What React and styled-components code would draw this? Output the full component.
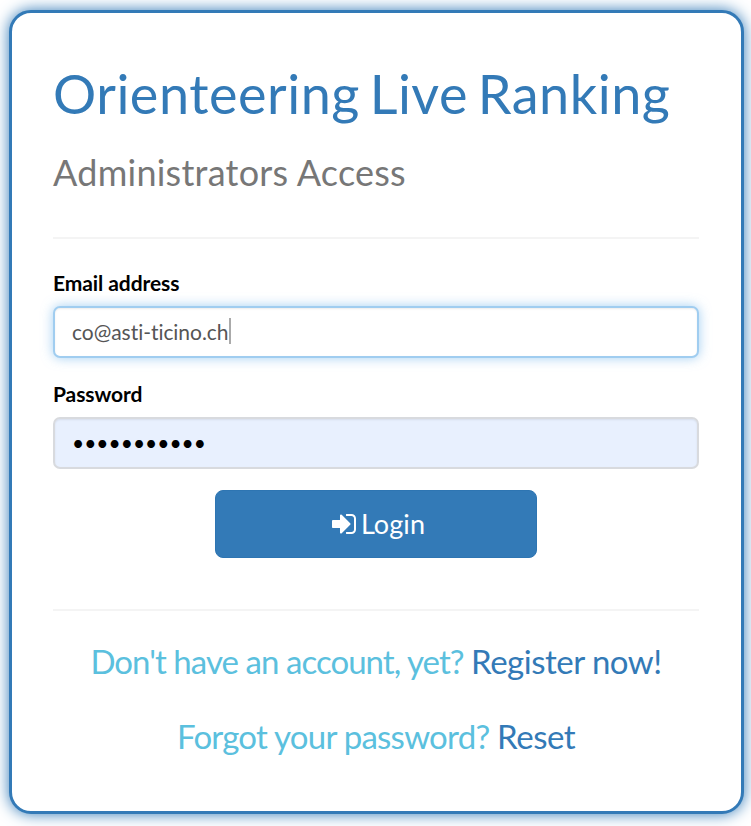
import React from "react";
import styled, { createGlobalStyle } from "styled-components";

const GlobalStyle = createGlobalStyle`
  * { box-sizing: border-box; }
  body {
    margin: 0;
    background: #fff;
    font-family: Lato, sans-serif;
    font-variant-ligatures: none;
    color: #000;
  }
`;

const Screen = styled.div`
  height: 826px;
  padding: 10px 7px 0 9px;
  overflow: hidden;
`;

const Panel = styled.main`
  height: 804px;
  padding: 50px 42px 0 41px;
  border: 3px solid #337ab7;
  border-radius: 22px;
  background: #fff;
  box-shadow: 0 0 15px #337ab7;
`;

const Title = styled.h1`
  margin: 0;
  font-size: 54px;
  font-weight: 400;
  line-height: 62px;
  letter-spacing: 0.52px;
  word-spacing: -4.6px;
  color: #337ab7;
  white-space: nowrap;
`;

const Subtitle = styled.h2`
  margin: 27px 0 0;
  font-size: 36px;
  font-weight: 400;
  line-height: 40px;
  letter-spacing: 0.25px;
  color: #777;
`;

const Divider = styled.hr`
  margin: ${({ $top }) => $top}px 0 0;
  border: 0;
  border-top: 2px solid #f4f4f4;
`;

const Label = styled.label`
  display: block;
  margin-top: ${({ $top }) => $top}px;
  height: 28px;
  font-size: 21px;
  font-weight: 700;
  line-height: 28px;
  letter-spacing: -0.08px;
`;

const Field = styled.div`
  display: flex;
  align-items: center;
  height: 52px;
  margin-top: 9px;
  padding: 0 17px 2px;
  border: 2px solid ${({ $focused }) => ($focused ? "#a0cdf0" : "#d8dade")};
  border-radius: 7px;
  background: ${({ $focused }) => ($focused ? "#fff" : "#e8f0fe")};
  box-shadow: inset 0 1px 2px rgba(0, 0, 0, 0.08)
    ${({ $focused }) => $focused && ", 0 0 12px rgba(102, 175, 233, 0.6)"};
  font-size: 21px;
  letter-spacing: -0.04px;
  color: #555;
`;

const Caret = styled.span`
  width: 2px;
  height: 26px;
  background: #aaa;
`;

const Dots = styled.span`
  color: #000;
  letter-spacing: 0;
`;

const Button = styled.button`
  display: flex;
  align-items: center;
  justify-content: center;
  gap: 5px;
  width: 322px;
  height: 68px;
  margin: 21px 0 0 161.5px;
  padding: 0 0 1px 6px;
  border: 1px solid #2e75b2;
  border-radius: 8px;
  background: #337ab7;
  color: #fff;
  font: 400 27px Lato, sans-serif;
  letter-spacing: 0.1px;
`;

const SignInGlyph = styled.svg`
  width: 24px;
  height: 28px;
  fill: currentColor;
`;

const Prompt = styled.p`
  margin: ${({ $top }) => $top}px 0 0;
  font-size: 33px;
  line-height: 40px;
  letter-spacing: ${({ $tracking }) => $tracking}px;
  text-align: center;
  white-space: nowrap;
  color: #5bc0de;
`;

const Link = styled.a`
  color: #337ab7;
  letter-spacing: -0.5px;
`;

function SignInIcon() {
  return (
    <SignInGlyph viewBox="0 0 1536 1792" aria-hidden="true">
      <path d="M1184 896q0 26-19 45l-544 544q-19 19-45 19t-45-19-19-45v-288h-448q-26 0-45-19t-19-45v-384q0-26 19-45t45-19h448v-288q0-26 19-45t45-19 45 19l544 544q19 19 19 45zm352-352v704q0 119-84.500 203.500t-203.500 84.500h-320q-13 0-22.500-9.500t-9.500-22.500q0-4-1-20t-.5-26.500 3-23.500 10-19.500 20.500-6.500h320q66 0 113-47t47-113v-704q0-66-47-113t-113-47h-312l-11.500-1-11.500-3-8-5.500-7-9-2-13.500q0-4-1-20t-.5-26.500 3-23.500 10-19.500 20.500-6.500h320q119 0 203.500 84.500t84.500 203.500z" />
    </SignInGlyph>
  );
}

export default function App() {
  return (
    <>
      <GlobalStyle />
      <Screen>
        <Panel>
          <Title>Orienteering Live Ranking</Title>
          <Subtitle>Administrators Access</Subtitle>
          <Divider $top={45} />
          <Label $top={30}>Email address</Label>
          <Field $focused>co@asti-ticino.ch<Caret /></Field>
          <Label $top={22}>Password</Label>
          <Field><Dots>•••••••••••</Dots></Field>
          <Button><SignInIcon />Login</Button>
          <Divider $top={51} />
          <Prompt $top={30} $tracking={-0.95}>
            Don't have an account, yet? <Link>Register now!</Link>
          </Prompt>
          <Prompt $top={35} $tracking={-0.75}>
            Forgot your password? <Link>Reset</Link>
          </Prompt>
        </Panel>
      </Screen>
    </>
  );
}
